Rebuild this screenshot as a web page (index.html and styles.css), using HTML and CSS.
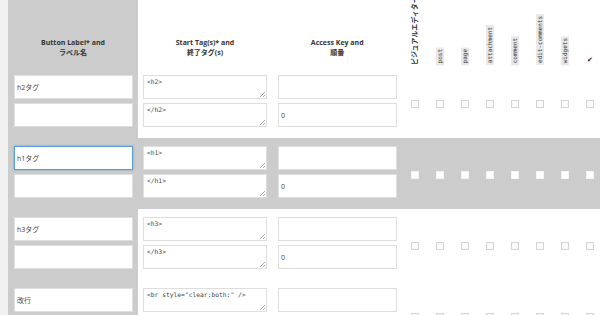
FILE: index.html
```html
<!DOCTYPE html>
<html lang="ja">
<head>
    <meta charset="UTF-8">
    <title>Buttons</title>
    <link rel="stylesheet" href="styles.css">
</head>
<body>
    <table class="buttons">
        <colgroup>
            <col class="w-label">
            <col class="w-tag">
            <col class="w-key">
            <col class="w-check"><col class="w-check"><col class="w-check"><col class="w-check">
            <col class="w-check"><col class="w-check"><col class="w-check"><col class="w-check">
        </colgroup>
        <thead>
            <tr>
                <th class="col-label">Button Label* and<br>ラベル名</th>
                <th>Start Tag(s)* and<br>終了タグ(s)</th>
                <th>Access Key and<br>順番</th>
                <th class="col-check"><span class="vlabel long">ビジュアルエディター</span></th>
                <th class="col-check"><code class="vlabel">post</code></th>
                <th class="col-check"><code class="vlabel">page</code></th>
                <th class="col-check"><code class="vlabel">attachment</code></th>
                <th class="col-check"><code class="vlabel">comment</code></th>
                <th class="col-check"><code class="vlabel">edit-comments</code></th>
                <th class="col-check"><code class="vlabel">widgets</code></th>
                <th class="col-check"><span class="mark">✔</span></th>
            </tr>
        </thead>
        <tbody>
            <tr>
                <td class="col-label"><div class="stack"><input type="text" value="h2タグ"><input type="text"></div></td>
                <td><div class="stack"><textarea>&lt;h2&gt;</textarea><textarea>&lt;/h2&gt;</textarea></div></td>
                <td class="col-key"><div class="stack"><input type="text"><input type="text" value="0"></div></td>
                <td class="col-check"><input type="checkbox"></td>
                <td class="col-check"><input type="checkbox"></td>
                <td class="col-check"><input type="checkbox"></td>
                <td class="col-check"><input type="checkbox"></td>
                <td class="col-check"><input type="checkbox"></td>
                <td class="col-check"><input type="checkbox"></td>
                <td class="col-check"><input type="checkbox"></td>
                <td class="col-check"><input type="checkbox"></td>
            </tr>
            <tr class="active">
                <td class="col-label"><div class="stack"><input type="text" class="focus" value="h1タグ"><input type="text"></div></td>
                <td><div class="stack"><textarea>&lt;h1&gt;</textarea><textarea>&lt;/h1&gt;</textarea></div></td>
                <td class="col-key"><div class="stack"><input type="text"><input type="text" value="0"></div></td>
                <td class="col-check"><input type="checkbox"></td>
                <td class="col-check"><input type="checkbox"></td>
                <td class="col-check"><input type="checkbox"></td>
                <td class="col-check"><input type="checkbox"></td>
                <td class="col-check"><input type="checkbox"></td>
                <td class="col-check"><input type="checkbox"></td>
                <td class="col-check"><input type="checkbox"></td>
                <td class="col-check"><input type="checkbox"></td>
            </tr>
            <tr>
                <td class="col-label"><div class="stack"><input type="text" value="h3タグ"><input type="text"></div></td>
                <td><div class="stack"><textarea>&lt;h3&gt;</textarea><textarea>&lt;/h3&gt;</textarea></div></td>
                <td class="col-key"><div class="stack"><input type="text"><input type="text" value="0"></div></td>
                <td class="col-check"><input type="checkbox"></td>
                <td class="col-check"><input type="checkbox"></td>
                <td class="col-check"><input type="checkbox"></td>
                <td class="col-check"><input type="checkbox"></td>
                <td class="col-check"><input type="checkbox"></td>
                <td class="col-check"><input type="checkbox"></td>
                <td class="col-check"><input type="checkbox"></td>
                <td class="col-check"><input type="checkbox"></td>
            </tr>
            <tr>
                <td class="col-label"><div class="stack"><input type="text" value="改行"><input type="text"></div></td>
                <td><div class="stack"><textarea>&lt;br style="clear:both:" /&gt;</textarea><textarea></textarea></div></td>
                <td class="col-key"><div class="stack"><input type="text"><input type="text"></div></td>
                <td class="col-check"><input type="checkbox"></td>
                <td class="col-check"><input type="checkbox"></td>
                <td class="col-check"><input type="checkbox"></td>
                <td class="col-check"><input type="checkbox"></td>
                <td class="col-check"><input type="checkbox"></td>
                <td class="col-check"><input type="checkbox"></td>
                <td class="col-check"><input type="checkbox"></td>
                <td class="col-check"><input type="checkbox"></td>
            </tr>
        </tbody>
    </table>
</body>
</html>
```

FILE: styles.css
```css
html, body {
    overflow: hidden;
}

body {
    margin: 0;
    padding-left: 8px;
    background: #f1f1f1;
    font-family: 'Open Sans', 'Noto Sans CJK JP', sans-serif;
    color: #444;
}

.buttons {
    border-collapse: collapse;
    table-layout: fixed;
    width: 594.5px;
    background: #fff;
}

.w-label { width: 130px; }
.w-tag { width: 134px; }
.w-key { width: 130.5px; }
.w-check { width: 25px; }

th {
    height: 58px;
    padding: 0 0 9px;
    font-size: 7px;
    line-height: 10px;
    font-weight: 700;
    color: #333;
    text-align: center;
    vertical-align: bottom;
}

th.col-check {
    padding-bottom: 2px;
    overflow: visible;
    white-space: nowrap;
}

.col-label {
    background: #ccc;
}

.vlabel {
    display: inline-block;
    writing-mode: vertical-rl;
    text-orientation: sideways;
    transform: rotate(180deg);
    vertical-align: bottom;
}

.vlabel.long {
    height: 60px;
    line-height: 8px;
    overflow: visible;
}

code.vlabel {
    font-family: 'DejaVu Sans Mono', monospace;
    font-size: 6px;
    font-weight: 400;
    line-height: 8px;
    padding: 2px 0;
    background: #e9e9e9;
    color: #333;
}

.mark {
    display: inline-block;
    font-family: 'DejaVu Sans', sans-serif;
    font-size: 7px;
    line-height: 8px;
    margin-bottom: 1px;
    color: #222;
}

td {
    padding: 8px 5px 11px 6px;
    vertical-align: top;
}

td.col-check {
    padding: 0;
    text-align: center;
    vertical-align: middle;
}

tr.active td {
    background: #ccc;
}

.stack {
    display: flex;
    flex-direction: column;
    gap: 4px;
}

input[type="text"],
textarea {
    box-sizing: border-box;
    width: 119px;
    height: 24px;
    margin: 0;
    border: 1px solid #dedede;
    background: #fff;
    color: #444;
    font-size: 7px;
    outline: none;
}

input[type="text"] {
    padding: 0 2px;
    font-family: 'Open Sans', 'Noto Sans CJK JP', sans-serif;
}

input.focus {
    border-color: #5b9dd9;
    box-shadow: 0 0 2px rgba(30, 140, 190, 0.6);
}

textarea {
    display: block;
    width: 124px;
    padding: 2px 3px;
    font-family: 'DejaVu Sans Mono', monospace;
    font-size: 6.3px;
    line-height: 8px;
    resize: none;
    overflow: hidden;
    background-image: linear-gradient(135deg, transparent 45%, #aaa 45%, #aaa 58%, transparent 58%, transparent 74%, #aaa 74%, #aaa 87%, transparent 87%);
    background-size: 5px 5px;
    background-position: right 1px bottom 1px;
    background-repeat: no-repeat;
}

td + td {
    padding-left: 5px;
}

td.col-key {
    padding-left: 6px;
}

input[type="checkbox"] {
    appearance: none;
    box-sizing: border-box;
    width: 8px;
    height: 8px;
    margin: 0;
    border: 1px solid #d4d4d4;
    background: #fbfbfb;
    vertical-align: middle;
}

tr.active input[type="checkbox"] {
    border-color: #f4f4f4;
    background: #fff;
}
```
